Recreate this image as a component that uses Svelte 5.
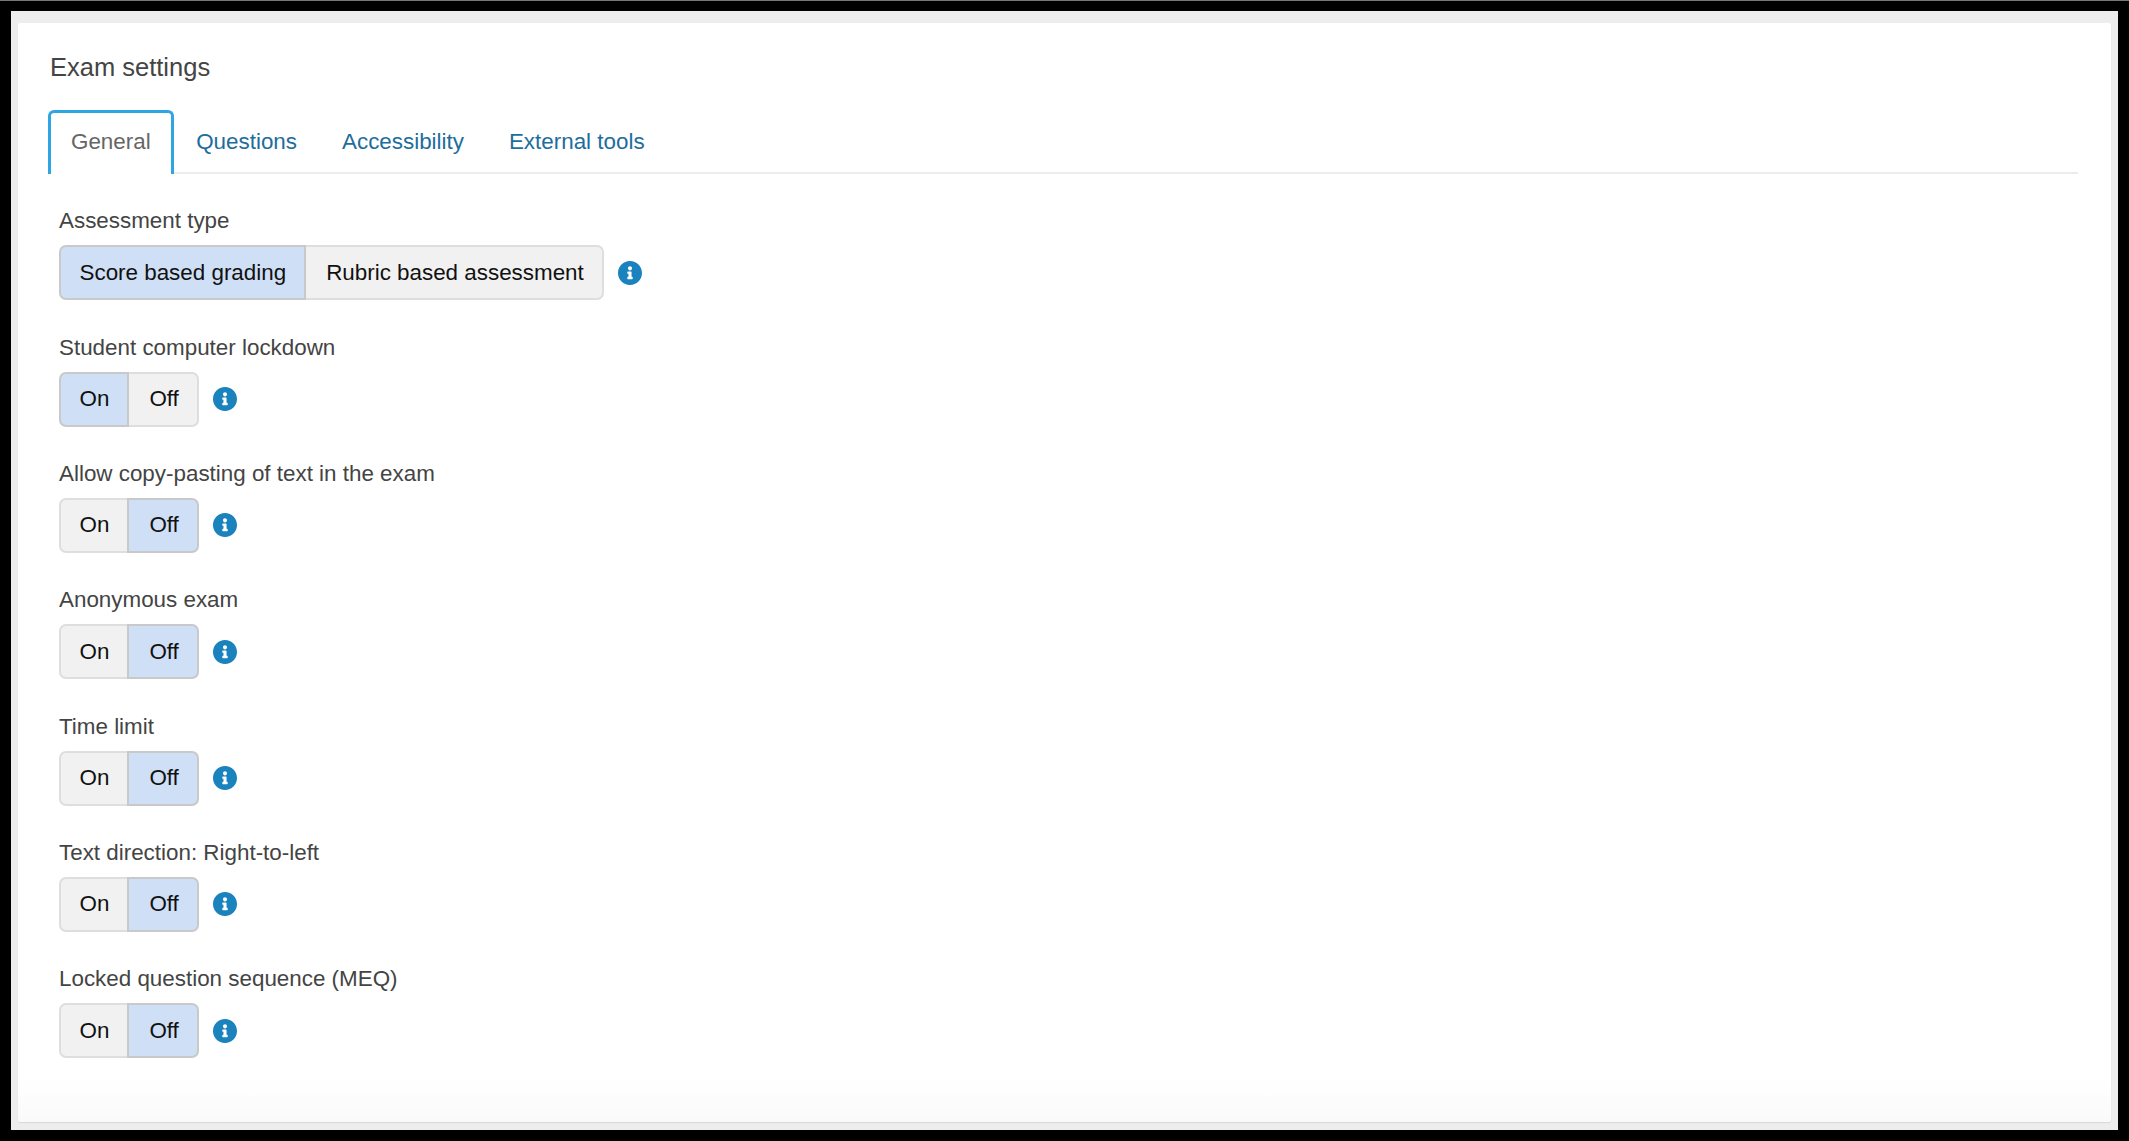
<script>
    const tabs = ['General', 'Questions', 'Accessibility', 'External tools'];
    let activeTab = $state('General');

    let fields = $state([
        { label: 'Assessment type', options: ['Score based grading', 'Rubric based assessment'], value: 0 },
        { label: 'Student computer lockdown', options: ['On', 'Off'], value: 0 },
        { label: 'Allow copy-pasting of text in the exam', options: ['On', 'Off'], value: 1 },
        { label: 'Anonymous exam', options: ['On', 'Off'], value: 1 },
        { label: 'Time limit', options: ['On', 'Off'], value: 1 },
        { label: 'Text direction: Right-to-left', options: ['On', 'Off'], value: 1 },
        { label: 'Locked question sequence (MEQ)', options: ['On', 'Off'], value: 1 },
    ]);
</script>

<div class="page">
    <div class="frame">
        <main class="card">
            <h1>Exam settings</h1>

            <nav class="tabs">
                {#each tabs as tab}
                    <button class="tab" class:active={activeTab === tab} onclick={() => (activeTab = tab)}>{tab}</button>
                {/each}
            </nav>

            <div class="fields">
                {#each fields as field}
                    <div class="field">
                        <div class="label">{field.label}</div>
                        <div class="control">
                            <div class="group">
                                {#each field.options as option, i}
                                    <button class="option" class:selected={field.value === i} onclick={() => (field.value = i)}>{option}</button>
                                {/each}
                            </div>
                            <svg class="info" viewBox="8 8 496 496" aria-hidden="true">
                                <path d="M256 8C119.043 8 8 119.083 8 256c0 136.997 111.043 248 248 248s248-111.003 248-248C504 119.083 392.957 8 256 8zm0 110c23.196 0 42 18.804 42 42s-18.804 42-42 42-42-18.804-42-42 18.804-42 42-42zm56 254c0 6.627-5.373 12-12 12h-88c-6.627 0-12-5.373-12-12v-24c0-6.627 5.373-12 12-12h12v-64h-12c-6.627 0-12-5.373-12-12v-24c0-6.627 5.373-12 12-12h64c6.627 0 12 5.373 12 12v100h12c6.627 0 12 5.373 12 12v24z" />
                            </svg>
                        </div>
                    </div>
                {/each}
            </div>
        </main>
    </div>
</div>

<style>
    :global(body) {
        margin: 0;
        background: #000;
    }

    .page {
        box-sizing: border-box;
        height: 100vh;
        padding: 10px 11px 11px 11px;
        background: #000;
        border-top: 1px solid #777;
        font-family: "Liberation Sans", Arial, sans-serif;
        display: flex;
    }

    .frame {
        flex: 1;
        display: flex;
        padding: 12px 7px 8px 7px;
        background: #ededed;
    }

    .card {
        flex: 1;
        box-sizing: border-box;
        padding: 27.5px 33px 0 30px;
        background: linear-gradient(to bottom, #fff 96%, #fafafa 100%);
        border-radius: 2px;
        box-shadow: 0 1px 1px #d8d8d8;
    }

    h1 {
        margin: 0 0 27px 2px;
        font-size: 25.5px;
        line-height: 32px;
        font-weight: 400;
        color: #444;
    }

    .tabs {
        display: flex;
        height: 62.5px;
        border-bottom: 2px solid #ececec;
    }

    .tab {
        height: 64.5px;
        padding: 0 19.5px 2.5px;
        border: 3px solid transparent;
        border-bottom: 0;
        border-radius: 6px 6px 0 0;
        background: none;
        font: inherit;
        font-size: 22.4px;
        color: #1d6d9c;
        cursor: pointer;
    }

    .tab.active {
        padding: 0 20px 2.5px;
        border-color: #2ea6e4;
        background: #fff;
        color: #666;
    }

    .fields {
        padding: 30.4px 0 0 11px;
    }

    .field {
        height: 126.3px;
    }

    .label {
        padding-top: 2px;
        margin-bottom: 9px;
        font-size: 22.4px;
        line-height: 30px;
        color: #444;
    }

    .control {
        display: flex;
        align-items: center;
        gap: 14px;
    }

    .group {
        display: flex;
        height: 55px;
    }

    .option {
        border: 2px solid #dedede;
        background: #f1f1f1;
        font: inherit;
        font-size: 22.4px;
        color: #111;
        cursor: pointer;
    }

    .option:first-child {
        padding: 0 18px 0 18.5px;
        border-radius: 7px 0 0 7px;
    }

    .option:last-child {
        padding: 0 18.5px 0 20px;
        margin-left: -2px;
        border-radius: 0 7px 7px 0;
    }

    .option.selected {
        position: relative;
        background: #cfdff5;
        border-color: #c9c9c9;
    }

    .info {
        width: 24px;
        height: 24px;
        fill: #1a82bd;
    }
</style>
